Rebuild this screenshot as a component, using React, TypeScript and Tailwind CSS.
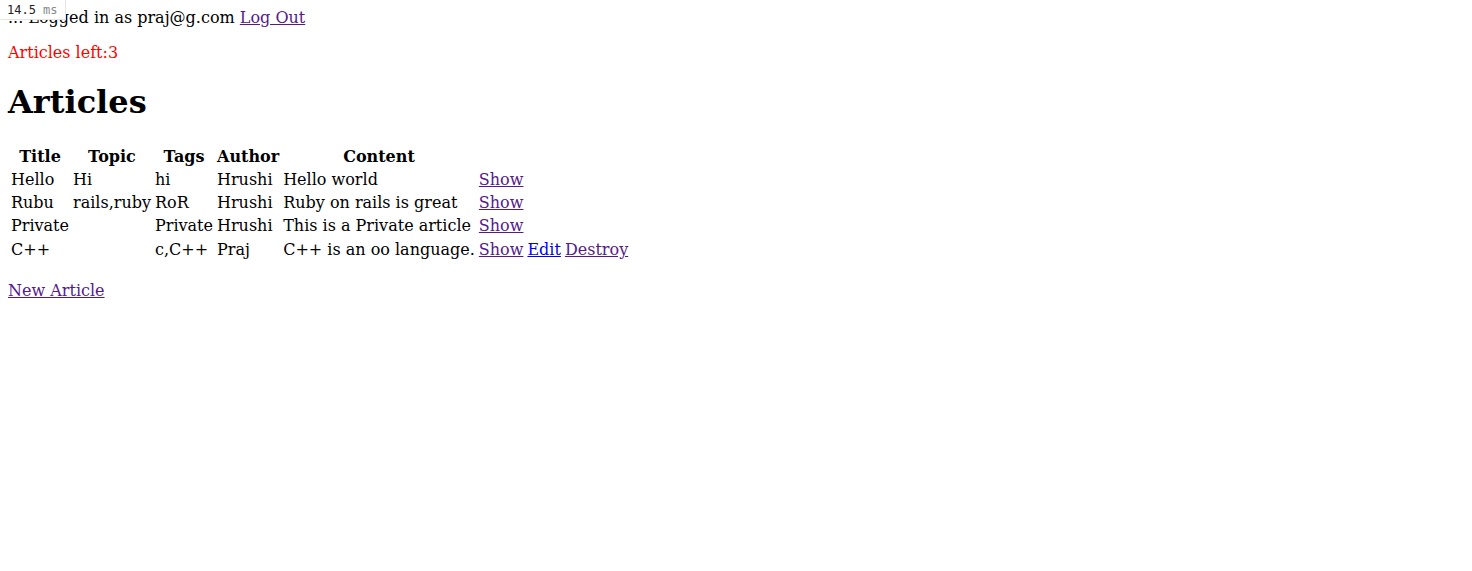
import React from "react";

const rows = [
  ["Hello", "Hi", "hi", "Hrushi", "Hello world", false],
  ["Rubu", "rails,ruby", "RoR", "Hrushi", "Ruby on rails is great", false],
  ["Private", "", "Private", "Hrushi", "This is a Private article", false],
  ["C++", "", "c,C++", "Praj", "C++ is an oo language.", true],
] as const;

export default function App() {
  const visited = "text-[#551A8B] underline";
  return (
    <div className="relative min-h-[571px] bg-white p-2 font-['DejaVu_Serif',serif] text-base leading-[normal] text-black">
      <div className="absolute left-0 top-0 z-10 flex h-[20px] w-[66px] items-center border-b border-r border-[#e5e5e5] bg-white pl-[7px] font-['DejaVu_Sans_Mono',monospace] text-[12px] leading-none">
        <span className="text-[#222]">14.5</span>
        <span className="ml-[7px] text-[#888]">ms</span>
      </div>
      <div>
        ... Logged in as praj@g.com{" "}
        <a href="#" className={visited}>
          Log Out
        </a>
      </div>
      <p className="my-4 text-[#FF0000]">Articles left:3</p>
      <h1 className="mt-[21.44px] mb-[22.6px] text-[32px] font-bold">Articles</h1>
      <table className="border-separate border-spacing-[2px]">
        <thead>
          <tr>
            {["Title", "Topic", "Tags", "Author", "Content"].map((h) => (
              <th key={h} className="p-[1px] text-center font-bold">
                {h}
              </th>
            ))}
            <th colSpan={3} className="p-[1px]"></th>
          </tr>
        </thead>
        <tbody>
          {rows.map((r) => {
            const td = r[5]
              ? "px-[1px] pt-[2px] pb-[1px] text-left align-middle"
              : "p-[1px] text-left align-middle";
            return (
              <tr key={r[0]}>
                <td className={td}>{r[0]}</td>
                <td className={td}>{r[1]}</td>
                <td className={td}>{r[2]}</td>
                <td className={td}>{r[3]}</td>
                <td className={td}>{r[4]}</td>
                <td className={td}>
                  <a href="#" className={visited}>
                    Show
                  </a>
                </td>
                <td className={td}>
                  {r[5] ? (
                    <a href="#" className="text-[#0000EE] underline">
                      Edit
                    </a>
                  ) : null}
                </td>
                <td className={td}>
                  {r[5] ? (
                    <a href="#" className={visited}>
                      Destroy
                    </a>
                  ) : null}
                </td>
              </tr>
            );
          })}
        </tbody>
      </table>
      <br />
      <a href="#" className={visited}>
        New Article
      </a>
    </div>
  );
}
